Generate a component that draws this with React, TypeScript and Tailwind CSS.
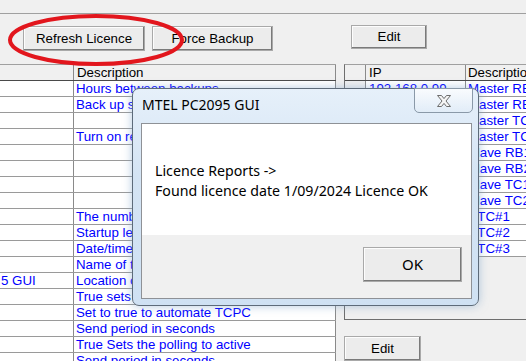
import React from "react";

const leftRows: [string, string][] = [
  ["", "Hours between backups"],
  ["", "Back up settings on start"],
  ["", ""],
  ["", "Turn on remote backup"],
  ["", ""],
  ["", ""],
  ["", ""],
  ["", ""],
  ["", "The number of backups kept"],
  ["", "Startup level"],
  ["", "Date/time of last backup"],
  ["", "Name of this PC"],
  ["5 GUI", "Location of the GUI"],
  ["", "True sets the GUI to log"],
  ["", "Set to true to automate TCPC"],
  ["", "Send period in seconds"],
  ["", "True Sets the polling to active"],
  ["", "Send period in seconds"],
];

const rightRows: [string, string][] = [
  ["192.168.0.99", "Master RB1"],
  ["192.168.0.98", "Master RB2"],
  ["192.168.0.97", "Master TC1"],
  ["192.168.0.96", "Master TC2"],
  ["192.168.0.95", "Slave RB1"],
  ["192.168.0.94", "Slave RB2"],
  ["192.168.0.93", "Slave TC1"],
  ["192.168.0.92", "Slave TC2"],
  ["192.168.0.91", "RTC#1"],
  ["192.168.0.90", "RTC#2"],
  ["192.168.0.89", "RTC#3"],
];

function Btn({ className, children }: { className: string; children: React.ReactNode }) {
  return (
    <div
      className={
        "flex items-center justify-center bg-[#ececec] border border-[#a9a9a9] shadow-[inset_-1px_-1px_0_#7a7a7a,inset_1px_1px_0_#fdfdfd] text-black " +
        className
      }
    >
      {children}
    </div>
  );
}

export default function App() {
  return (
    <div className="relative w-[526px] h-[361px] overflow-hidden bg-[#f0f0f0] font-['Liberation_Sans',Arial,sans-serif] text-[13.3px] text-black">
      <div className="h-[14px] border-b border-[#a0a0a0]" />
      <div className="flex items-start h-[50px]">
        <Btn className="ml-[23px] mt-[12px] w-[122px] h-[25px]">Refresh Licence</Btn>
        <Btn className="ml-[7px] mt-[12px] w-[121px] h-[25px]">Force Backup</Btn>
        <Btn className="ml-[78px] mt-[11px] w-[76px] h-[24px]">Edit</Btn>
      </div>
      <div className="flex h-[297px]">
        {/* left grid */}
        <div className="w-[336px] flex flex-col shrink-0">
          <div className="flex h-[17px] border-t border-b border-t-[#a0a0a0] border-b-[#4a4a4a] leading-[15px]">
            <div className="w-[74px] border-r border-[#8a8a8a]" />
            <div className="flex-1 border-r border-[#8a8a8a] pl-[3px]">Description</div>
          </div>
          {leftRows.map((r, i) => (
            <div key={i} className="flex h-[16px] shrink-0 border-b border-[#9a9a9a] bg-white text-[#0000ff] leading-[15px] whitespace-nowrap">
              <div className="w-[74px] border-r border-[#8a8a8a] pl-[1px] overflow-hidden">{r[0]}</div>
              <div className="flex-1 border-r border-[#8a8a8a] pl-[2px] overflow-hidden">{r[1]}</div>
            </div>
          ))}
        </div>
        {/* right panel */}
        <div className="ml-[8px] flex-1 flex flex-col min-w-0">
          <div className="h-[264px] border-t border-l border-b border-t-[#a0a0a0] border-l-[#6e6e6e] border-b-[#6e6e6e] flex flex-col">
            <div className="flex h-[16px] border-b border-[#4a4a4a] leading-[15px] whitespace-nowrap">
              <div className="w-[21px] border-r border-[#8a8a8a]" />
              <div className="w-[100px] border-r border-[#8a8a8a] pl-[3px]">IP</div>
              <div className="flex-1 pl-[2px] overflow-hidden">Description</div>
            </div>
            {rightRows.map((r, i) => (
              <div key={i} className="flex h-[16px] shrink-0 border-b border-[#9a9a9a] leading-[15px] whitespace-nowrap text-[#0000ff]">
                <div className="w-[21px] border-r border-[#8a8a8a] bg-[#f0f0f0]" />
                <div className="w-[100px] border-r border-[#8a8a8a] pl-[3px] bg-white overflow-hidden">{r[0]}</div>
                <div className="flex-1 pl-[2px] bg-white overflow-hidden">{r[1]}</div>
              </div>
            ))}
          </div>
          <Btn className="mt-[16px] w-[77px] h-[25px] shrink-0">Edit</Btn>
        </div>
      </div>

      {/* red annotation ellipse */}
      <svg className="absolute left-0 top-0" width="200" height="80" viewBox="0 0 200 80">
        <ellipse cx="96" cy="40" rx="86" ry="24" fill="none" stroke="#e2161d" strokeWidth="4" />
      </svg>

      {/* message box */}
      <div className="absolute left-[132px] top-[88px] w-[347px] h-[218px] rounded-[7px] border border-[#5d6b7a] bg-[linear-gradient(180deg,#e6f0fa_0%,#d4e4f4_40%,#cfe1f3_100%)] shadow-[0_0_10px_rgba(120,160,200,0.55)] flex flex-col pl-[8px] pr-[6px] pb-[6px] font-['Noto_Sans',sans-serif]">
        <div className="h-[34px] shrink-0 pl-[1px] pt-[6px] text-[14px] leading-[20px] text-black">MTEL PC2095 GUI</div>
        <div className="flex-1 flex flex-col border border-[#8e9196] bg-[#f0f0f0]">
          <div className="h-[111px] bg-white pl-[13px] pt-[37px] text-[14.2px] leading-[20px] text-black">
            <div>Licence Reports -&gt;</div>
            <div>Found licence date 1/09/2024 Licence OK</div>
          </div>
          <div className="flex justify-end pr-[9px] pt-[12px]">
            <Btn className="w-[99px] h-[35px] text-[15px]">OK</Btn>
          </div>
        </div>
        <div className="absolute left-[281px] top-[-1px] w-[59px] h-[25px] rounded-b-[5px] border border-[#8a99a8] bg-[linear-gradient(180deg,rgba(255,255,255,0.75),rgba(225,236,247,0.6))] flex items-center justify-center">
          <svg width="16" height="14" viewBox="0 0 16 14">
            <path d="M1.5 1.5 H5.5 L8 4.6 L10.5 1.5 H14.5 L10 7 L14.5 12.5 H10.5 L8 9.4 L5.5 12.5 H1.5 L6 7 Z" fill="#f5f5f5" stroke="#6d6d6d" strokeWidth="1" strokeLinejoin="round" />
          </svg>
        </div>
      </div>
    </div>
  );
}
